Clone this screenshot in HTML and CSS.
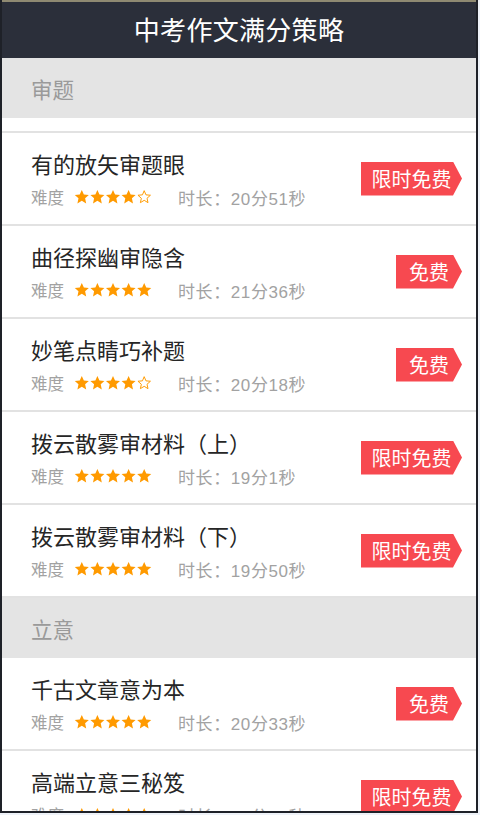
FILE: index.html
```html
<!DOCTYPE html>
<html lang="zh">
<head>
<meta charset="utf-8">
<title>中考作文满分策略</title>
<link rel="stylesheet" href="styles.css">
</head>
<body>
<div class="screen">
  <div class="topstrip"></div>
  <header class="navbar"><h1>中考作文满分策略</h1></header>

  <div class="section">审题</div>
  <div class="spacer"></div>

  <div class="row">
    <div class="info">
      <div class="title">有的放矢审题眼</div>
      <div class="meta"><span>难度</span>
        <svg class="stars" viewBox="0 0 80 16"><g fill="#ff9a00"><polygon points="8,0.8 10.1,5.4 15.2,5.9 11.4,9.3 12.5,14.6 8,11.9 3.5,14.6 4.6,9.3 0.8,5.9 5.9,5.4"/><polygon transform="translate(16 0)" points="8,0.8 10.1,5.4 15.2,5.9 11.4,9.3 12.5,14.6 8,11.9 3.5,14.6 4.6,9.3 0.8,5.9 5.9,5.4"/><polygon transform="translate(32 0)" points="8,0.8 10.1,5.4 15.2,5.9 11.4,9.3 12.5,14.6 8,11.9 3.5,14.6 4.6,9.3 0.8,5.9 5.9,5.4"/><polygon transform="translate(48 0)" points="8,0.8 10.1,5.4 15.2,5.9 11.4,9.3 12.5,14.6 8,11.9 3.5,14.6 4.6,9.3 0.8,5.9 5.9,5.4"/></g><polygon transform="translate(64 0)" fill="none" stroke="#ff9a00" stroke-width="1" points="8,1.5 9.8,5.8 14.4,6.2 10.9,9.3 11.9,13.8 8,11.4 4.1,13.8 5.1,9.3 1.6,6.2 6.2,5.8"/></svg>
        <span class="dur">时长：20分51秒</span></div>
    </div>
    <div class="badge long">限时免费</div>
  </div>

  <div class="row">
    <div class="info">
      <div class="title">曲径探幽审隐含</div>
      <div class="meta"><span>难度</span>
        <svg class="stars" viewBox="0 0 80 16"><g fill="#ff9a00"><polygon points="8,0.8 10.1,5.4 15.2,5.9 11.4,9.3 12.5,14.6 8,11.9 3.5,14.6 4.6,9.3 0.8,5.9 5.9,5.4"/><polygon transform="translate(16 0)" points="8,0.8 10.1,5.4 15.2,5.9 11.4,9.3 12.5,14.6 8,11.9 3.5,14.6 4.6,9.3 0.8,5.9 5.9,5.4"/><polygon transform="translate(32 0)" points="8,0.8 10.1,5.4 15.2,5.9 11.4,9.3 12.5,14.6 8,11.9 3.5,14.6 4.6,9.3 0.8,5.9 5.9,5.4"/><polygon transform="translate(48 0)" points="8,0.8 10.1,5.4 15.2,5.9 11.4,9.3 12.5,14.6 8,11.9 3.5,14.6 4.6,9.3 0.8,5.9 5.9,5.4"/><polygon transform="translate(64 0)" points="8,0.8 10.1,5.4 15.2,5.9 11.4,9.3 12.5,14.6 8,11.9 3.5,14.6 4.6,9.3 0.8,5.9 5.9,5.4"/></g></svg>
        <span class="dur">时长：21分36秒</span></div>
    </div>
    <div class="badge short">免费</div>
  </div>

  <div class="row">
    <div class="info">
      <div class="title">妙笔点睛巧补题</div>
      <div class="meta"><span>难度</span>
        <svg class="stars" viewBox="0 0 80 16"><g fill="#ff9a00"><polygon points="8,0.8 10.1,5.4 15.2,5.9 11.4,9.3 12.5,14.6 8,11.9 3.5,14.6 4.6,9.3 0.8,5.9 5.9,5.4"/><polygon transform="translate(16 0)" points="8,0.8 10.1,5.4 15.2,5.9 11.4,9.3 12.5,14.6 8,11.9 3.5,14.6 4.6,9.3 0.8,5.9 5.9,5.4"/><polygon transform="translate(32 0)" points="8,0.8 10.1,5.4 15.2,5.9 11.4,9.3 12.5,14.6 8,11.9 3.5,14.6 4.6,9.3 0.8,5.9 5.9,5.4"/><polygon transform="translate(48 0)" points="8,0.8 10.1,5.4 15.2,5.9 11.4,9.3 12.5,14.6 8,11.9 3.5,14.6 4.6,9.3 0.8,5.9 5.9,5.4"/></g><polygon transform="translate(64 0)" fill="none" stroke="#ff9a00" stroke-width="1" points="8,1.5 9.8,5.8 14.4,6.2 10.9,9.3 11.9,13.8 8,11.4 4.1,13.8 5.1,9.3 1.6,6.2 6.2,5.8"/></svg>
        <span class="dur">时长：20分18秒</span></div>
    </div>
    <div class="badge short">免费</div>
  </div>

  <div class="row">
    <div class="info">
      <div class="title">拨云散雾审材料（上）</div>
      <div class="meta"><span>难度</span>
        <svg class="stars" viewBox="0 0 80 16"><g fill="#ff9a00"><polygon points="8,0.8 10.1,5.4 15.2,5.9 11.4,9.3 12.5,14.6 8,11.9 3.5,14.6 4.6,9.3 0.8,5.9 5.9,5.4"/><polygon transform="translate(16 0)" points="8,0.8 10.1,5.4 15.2,5.9 11.4,9.3 12.5,14.6 8,11.9 3.5,14.6 4.6,9.3 0.8,5.9 5.9,5.4"/><polygon transform="translate(32 0)" points="8,0.8 10.1,5.4 15.2,5.9 11.4,9.3 12.5,14.6 8,11.9 3.5,14.6 4.6,9.3 0.8,5.9 5.9,5.4"/><polygon transform="translate(48 0)" points="8,0.8 10.1,5.4 15.2,5.9 11.4,9.3 12.5,14.6 8,11.9 3.5,14.6 4.6,9.3 0.8,5.9 5.9,5.4"/><polygon transform="translate(64 0)" points="8,0.8 10.1,5.4 15.2,5.9 11.4,9.3 12.5,14.6 8,11.9 3.5,14.6 4.6,9.3 0.8,5.9 5.9,5.4"/></g></svg>
        <span class="dur">时长：19分1秒</span></div>
    </div>
    <div class="badge long">限时免费</div>
  </div>

  <div class="row">
    <div class="info">
      <div class="title">拨云散雾审材料（下）</div>
      <div class="meta"><span>难度</span>
        <svg class="stars" viewBox="0 0 80 16"><g fill="#ff9a00"><polygon points="8,0.8 10.1,5.4 15.2,5.9 11.4,9.3 12.5,14.6 8,11.9 3.5,14.6 4.6,9.3 0.8,5.9 5.9,5.4"/><polygon transform="translate(16 0)" points="8,0.8 10.1,5.4 15.2,5.9 11.4,9.3 12.5,14.6 8,11.9 3.5,14.6 4.6,9.3 0.8,5.9 5.9,5.4"/><polygon transform="translate(32 0)" points="8,0.8 10.1,5.4 15.2,5.9 11.4,9.3 12.5,14.6 8,11.9 3.5,14.6 4.6,9.3 0.8,5.9 5.9,5.4"/><polygon transform="translate(48 0)" points="8,0.8 10.1,5.4 15.2,5.9 11.4,9.3 12.5,14.6 8,11.9 3.5,14.6 4.6,9.3 0.8,5.9 5.9,5.4"/><polygon transform="translate(64 0)" points="8,0.8 10.1,5.4 15.2,5.9 11.4,9.3 12.5,14.6 8,11.9 3.5,14.6 4.6,9.3 0.8,5.9 5.9,5.4"/></g></svg>
        <span class="dur">时长：19分50秒</span></div>
    </div>
    <div class="badge long">限时免费</div>
  </div>

  <div class="section">立意</div>

  <div class="row">
    <div class="info">
      <div class="title">千古文章意为本</div>
      <div class="meta"><span>难度</span>
        <svg class="stars" viewBox="0 0 80 16"><g fill="#ff9a00"><polygon points="8,0.8 10.1,5.4 15.2,5.9 11.4,9.3 12.5,14.6 8,11.9 3.5,14.6 4.6,9.3 0.8,5.9 5.9,5.4"/><polygon transform="translate(16 0)" points="8,0.8 10.1,5.4 15.2,5.9 11.4,9.3 12.5,14.6 8,11.9 3.5,14.6 4.6,9.3 0.8,5.9 5.9,5.4"/><polygon transform="translate(32 0)" points="8,0.8 10.1,5.4 15.2,5.9 11.4,9.3 12.5,14.6 8,11.9 3.5,14.6 4.6,9.3 0.8,5.9 5.9,5.4"/><polygon transform="translate(48 0)" points="8,0.8 10.1,5.4 15.2,5.9 11.4,9.3 12.5,14.6 8,11.9 3.5,14.6 4.6,9.3 0.8,5.9 5.9,5.4"/><polygon transform="translate(64 0)" points="8,0.8 10.1,5.4 15.2,5.9 11.4,9.3 12.5,14.6 8,11.9 3.5,14.6 4.6,9.3 0.8,5.9 5.9,5.4"/></g></svg>
        <span class="dur">时长：20分33秒</span></div>
    </div>
    <div class="badge short">免费</div>
  </div>

  <div class="row">
    <div class="info">
      <div class="title">高端立意三秘笈</div>
      <div class="meta"><span>难度</span>
        <svg class="stars" viewBox="0 0 80 16"><g fill="#ff9a00"><polygon points="8,0.8 10.1,5.4 15.2,5.9 11.4,9.3 12.5,14.6 8,11.9 3.5,14.6 4.6,9.3 0.8,5.9 5.9,5.4"/><polygon transform="translate(16 0)" points="8,0.8 10.1,5.4 15.2,5.9 11.4,9.3 12.5,14.6 8,11.9 3.5,14.6 4.6,9.3 0.8,5.9 5.9,5.4"/><polygon transform="translate(32 0)" points="8,0.8 10.1,5.4 15.2,5.9 11.4,9.3 12.5,14.6 8,11.9 3.5,14.6 4.6,9.3 0.8,5.9 5.9,5.4"/><polygon transform="translate(48 0)" points="8,0.8 10.1,5.4 15.2,5.9 11.4,9.3 12.5,14.6 8,11.9 3.5,14.6 4.6,9.3 0.8,5.9 5.9,5.4"/><polygon transform="translate(64 0)" points="8,0.8 10.1,5.4 15.2,5.9 11.4,9.3 12.5,14.6 8,11.9 3.5,14.6 4.6,9.3 0.8,5.9 5.9,5.4"/></g></svg>
        <span class="dur">时长：19分30秒</span></div>
    </div>
    <div class="badge long">限时免费</div>
  </div>
</div>
</body>
</html>
```

FILE: styles.css
```css
* { box-sizing: border-box; }
html, body { margin: 0; padding: 0; }
body {
  background: #eef2f8;
  font-family: "Liberation Sans", "Noto Sans CJK SC", sans-serif;
}
.screen {
  width: 478px;
  height: 813px;
  border-left: 2px solid #1e2128;
  border-right: 2px solid #1e2128;
  border-bottom: 2px solid #1e2128;
  background: #fff;
  overflow: hidden;
  display: flex;
  flex-direction: column;
}
.topstrip {
  flex: 0 0 2px;
  background: #8f8a72;
}
.navbar {
  flex: 0 0 56px;
  background: #2b2f3a;
  display: flex;
  align-items: center;
  justify-content: center;
}
.navbar h1 {
  margin: 0 0 3px;
  font-family: "Noto Sans CJK SC", sans-serif;
  font-weight: 400;
  font-size: 26px;
  letter-spacing: 0.3px;
  color: #fff;
}
.section {
  flex: 0 0 60px;
  background: #e4e4e4;
  display: flex;
  align-items: center;
  padding-left: 29px;
  font-family: "Noto Sans CJK SC", sans-serif;
  font-size: 21.5px;
  color: #9a9a9a;
}
.spacer {
  flex: 0 0 15px;
  border-bottom: 2px solid #e2e2e2;
}
.row {
  flex: 0 0 93px;
  border-bottom: 2px solid #e2e2e2;
  display: flex;
  align-items: center;
  justify-content: space-between;
  padding: 0 14px 0 29px;
}
.info {
  display: flex;
  flex-direction: column;
  align-self: stretch;
  padding-top: 15px;
}
.title {
  font-family: "Noto Sans CJK SC", sans-serif;
  font-size: 22px;
  line-height: 30px;
  color: #262626;
}
.meta {
  margin-top: 7px;
  display: flex;
  align-items: center;
  height: 24px;
  font-family: "Liberation Sans", "Noto Sans CJK SC", sans-serif;
  font-size: 16.5px;
  color: #a2a2a2;
}
.stars {
  width: 78px;
  height: 16px;
  margin-left: 10px;
}
.dur {
  margin-left: 26px;
  font-size: 17px;
  letter-spacing: 0.6px;
}
.badge {
  height: 34px;
  background: #f74950;
  color: #fff;
  font-family: "Noto Sans CJK SC", sans-serif;
  font-size: 20px;
  display: flex;
  align-items: center;
  justify-content: center;
  clip-path: polygon(0 0, calc(100% - 9px) 0, 100% 50%, calc(100% - 9px) 100%, 0 100%);
}
.badge.long { width: 101px; }
.badge.short { width: 66px; }
```
